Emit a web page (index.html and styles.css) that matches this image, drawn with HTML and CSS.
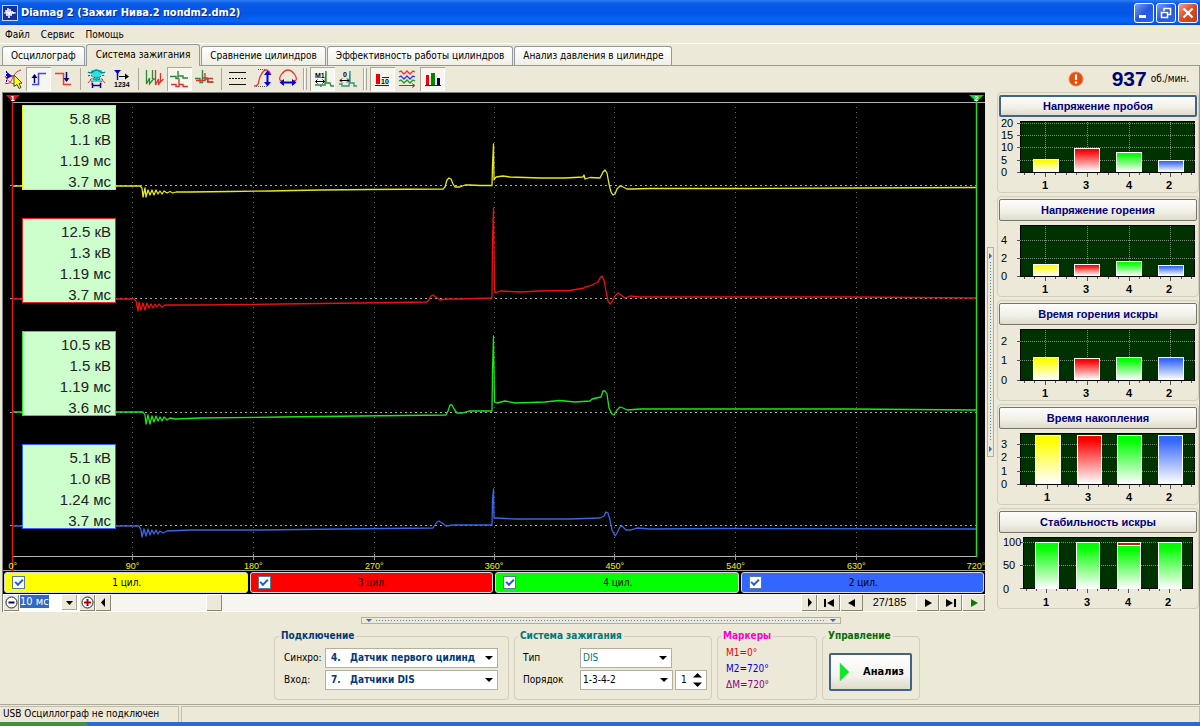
FILE: index.html
```html
<!DOCTYPE html>
<html lang="ru">
<head>
<meta charset="utf-8">
<title>Diamag 2</title>
<link rel="stylesheet" href="styles.css">
</head>
<body>
<div class="window">
  <header class="titlebar">
    <svg class="app-icon" width="16" height="16" viewBox="0 0 16 16"><rect x=".5" y=".5" width="15" height="15" fill="#1a2f9a" stroke="#c8d4f4"/><path d="M2 8H4V5L5 11 6 3 7 13 8 4 9 11 10 6 11 9 12 7V8H14" fill="none" stroke="#fff"/></svg>
    <h1 class="title">Diamag 2 (Зажиг Нива.2 попdm2.dm2)</h1>
    <div class="win-buttons">
      <button class="win-btn" aria-label="Свернуть"><svg width="18" height="18" viewBox="0 0 18 18"><path d="M4 12.500h7" stroke="#fff" stroke-width="3"/></svg></button>
      <button class="win-btn" aria-label="Восстановить"><svg width="18" height="18" viewBox="0 0 18 18"><path d="M7 7V4.500H13.500V10.500H11M6.500 4.500h7.500M4.500 8.500h6v5h-6z" fill="none" stroke="#fff" stroke-width="1.500"/></svg></button>
      <button class="win-btn win-close" aria-label="Закрыть"><svg width="18" height="18" viewBox="0 0 18 18"><path d="M4.500 4.500l9 9M13.500 4.500l-9 9" stroke="#fff" stroke-width="2.200"/></svg></button>
    </div>
  </header>

  <nav class="menu">
    <button>Файл</button><button>Сервис</button><button>Помощь</button>
  </nav>

  <div class="tabs" role="tablist">
    <button class="tab" role="tab">Осциллограф</button>
    <button class="tab tab-active" role="tab" aria-selected="true">Система зажигания</button>
    <button class="tab" role="tab">Сравнение цилиндров</button>
    <button class="tab" role="tab">Эффективность работы цилиндров</button>
    <button class="tab" role="tab">Анализ давления в цилиндре</button>
  </div>

  <main class="page">
    <div class="topline">
      <div class="toolbar">
        <button class="tool" aria-label="Курсор"><svg viewBox="0 0 25 24"><path d="M5.500 4v13" stroke="#00c" fill="none" stroke-dasharray="2 1"/><path d="M6 5l5 4-5 3z" fill="#00e"/><path d="M10 9h4" stroke="#00c" stroke-dasharray="2 1"/><path d="M4 16c5 2 6-2 8-6s4-6 8-7M4 9c3 5 5 7 9 8" stroke="#e03030" fill="none"/><path d="M13 8l8 8-3 .5 2 4-2 1-2-4-3 2z" fill="#ff0" stroke="#444"/></svg></button>
        <button class="tool pressed" aria-label="Фронт"><svg viewBox="0 0 25 24"><path d="M6 17.500h6.500v-11H20" stroke="#44f" stroke-width="1.500" fill="none"/><path d="M8.500 8v8" stroke="#007" stroke-width="1.500"/><path d="M5.500 11l3-4 3 4z" fill="#007"/></svg></button>
        <button class="tool" aria-label="Спад"><svg viewBox="0 0 25 24"><path d="M4 6.500h8.500v11H20" stroke="#f33" stroke-width="1.500" fill="none"/><path d="M15.500 5v9" stroke="#007" stroke-width="1.500"/><path d="M12.500 11l3 4 3-4z" fill="#007"/></svg></button>
        <i class="sep"></i>
        <button class="tool" aria-label="Диапазон"><svg viewBox="0 0 25 24"><path d="M7 3h11v4l-3 3 3 5H7l3-5-3-3z" fill="#2de0e0"/><path d="M4 5c4 3 5-2 8.500-2s5 5 8.500 2" stroke="#088" stroke-width="1.500" fill="none"/><path d="M4 9c4-2 5 2 8.500 2S18 7 21 9M6 13c3-3 4 0 6.500 0s4-3 6.500 0" stroke="#333" stroke-dasharray="2 1" fill="none"/><path d="M4 16c3-5 5-1 4 2M21 16c-3-5-5-1-4 2" stroke="#c33" fill="none"/><path d="M8.500 16v5M16.500 16v5M9 18.500h7" stroke="#00a" stroke-width="1.500"/></svg></button>
        <button class="tool" aria-label="Нумерация"><svg viewBox="0 0 25 24"><path d="M5 3h7L8.500 7z" fill="#00c"/><path d="M8.500 5v8" stroke="#00c" stroke-width="1.500"/><path d="M10 9.500h7" stroke="#000"/><path d="M16 6.500l4 3-4 3z"/><text x="5" y="20" class="icon-text">1234</text></svg></button>
        <i class="sep"></i>
        <button class="tool" aria-label="Парад"><svg viewBox="0 0 25 24"><path d="M4.500 3v14l3-6v6l4-5h2" stroke="#2a8a3a" stroke-width="1.300" fill="none"/><path d="M10.500 3v9" stroke="#2a8a3a" stroke-width="1.300"/><path d="M13.500 3v15l3-6v6l2-4V6v9l3-3" stroke="#d33" stroke-width="1.300" fill="none"/></svg></button>
        <button class="tool pressed" aria-label="Растр"><svg viewBox="0 0 25 24"><path d="M3 9.500h6v2h2V4v5h5v2h5" stroke="#2a8a3a" stroke-width="1.400" fill="none"/><path d="M4 17.500h5v2h3v-8v6h4v2h5" stroke="#d33" stroke-width="1.400" fill="none"/></svg></button>
        <button class="tool" aria-label="Наложение"><svg viewBox="0 0 25 24"><path d="M3 11.500h5v4h2.500V3v8h5v4h6" stroke="#2a8a3a" stroke-width="1.400" fill="none"/><path d="M4 13.500h9V6v6h3v3h5M16 11.500h5" stroke="#d33" stroke-width="1.400" fill="none"/></svg></button>
        <i class="sep"></i>
        <button class="tool" aria-label="Линии"><svg viewBox="0 0 25 24"><path d="M4 5.500h17M4 17.500h17" stroke="#111"/><path d="M4 11.500h17" stroke="#111" stroke-dasharray="2 1"/></svg></button>
        <button class="tool" aria-label="По вертикали"><svg viewBox="0 0 25 24"><path d="M4 19c6 0 4-5 6-9s3-7 6-7 4 3 5 5" stroke="#e33" stroke-width="1.300" fill="none"/><path d="M8 2.500h8M6 19.500h12" stroke="#555" stroke-dasharray="1 1"/><path d="M17.500 6v11" stroke="#00d" stroke-width="2"/><path d="M14 8l3.500-4.500L21 8zM14 15l3.500 4.500L21 15z" fill="#00d"/></svg></button>
        <button class="tool" aria-label="По горизонтали"><svg viewBox="0 0 25 24"><path d="M7 14c-3 0-3-3-1-6s4-5 7-5 5 2 7 5 2 6-1 6" stroke="#e33" stroke-width="1.300" fill="none"/><path d="M7 15.500h12" stroke="#00d" stroke-width="2"/><path d="M9 12l-4.500 3.500L9 19zM17 12l4.500 3.500L17 19z" fill="#00d"/></svg></button>
        <i class="sep sep-double"></i>
        <button class="tool pressed" aria-label="Маркер M1"><svg viewBox="0 0 25 24"><path d="M5 18h6v2M11 18h4l1-14v12h4l1 3h3" stroke="#298a4a" stroke-width="1.400" fill="none"/><path d="M6 14.500h8M7.500 12.500l-2 2 2 2M12.500 12.500l2 2-2 2" stroke="#000" fill="none"/><text x="5" y="11" class="icon-text">M1</text></svg></button>
        <button class="tool" aria-label="Маркер 0"><svg viewBox="0 0 25 24"><path d="M4 17h3v2h7l1-15v12h4v3h3" stroke="#299a8a" stroke-width="1.400" fill="none"/><path d="M5 13.500h9M7 11.500l-2 2 2 2M12 11.500l2 2-2 2" stroke="#000" fill="none"/><text x="8" y="10" class="icon-text">0</text></svg></button>
        <i class="sep sep-double"></i>
        <button class="tool pressed" aria-label="Значения"><svg viewBox="0 0 25 24"><path d="M6 7h4v10H6z" fill="#e00"/><path d="M5 18.500h14M12 10.500h7" stroke="#222"/><text x="11" y="17" class="icon-text">10</text></svg></button>
        <button class="tool" aria-label="Тренды"><svg viewBox="0 0 25 24"><g fill="none" stroke-width="1.300"><path d="M4 5l2-1 3 3 3-3 3 3 3-3 2 1" stroke="#e33"/><path d="M4 10l2-1 3 3 3-3 3 3 3-3 2 1" stroke="#33e"/><path d="M4 14l2-1 3 3 3-3 3 3 3-3 2 1" stroke="#292"/></g><path d="M4 18.500h15M17 16.500l3 2-3 2" stroke="#555" fill="none"/></svg></button>
        <button class="tool pressed" aria-label="Гистограммы"><svg viewBox="0 0 25 24"><path d="M5 18.500h16" stroke="#222"/><path d="M6 8h3v10H6z" fill="#e00"/><path d="M11 6h4v12h-4z" fill="#080"/><path d="M17 11h3v7h-3z" fill="#006"/></svg></button>
      </div>
      <div class="rpm">
        <svg class="alert" width="16" height="16" viewBox="0 0 16 16"><circle cx="8" cy="8" r="7" fill="#e0500a" stroke="#e8895a"/><path d="M8 3.500v5.500" stroke="#fff" stroke-width="2.200"/><circle cx="8" cy="11.500" r="1.300" fill="#fff"/></svg>
        <strong>937</strong><span>об./мин.</span>
      </div>
    </div>

    <div class="work">
      <section class="scope">
        <div class="plot">
          <svg class="plot-svg">
            <svg width="100%" height="100%" viewBox="3 93 982 478" preserveAspectRatio="none">
              <g fill="none" shape-rendering="crispEdges">
                <path d="M12 102.500H985M12 556.500H977" stroke="#b4b4b4"/>
                <path d="M132.500 107V556M253.500 107V556M374.500 107V556M494.500 107V556M614.500 107V556M735.500 107V556M856.500 107V556" stroke="#6a6a6a" stroke-dasharray="1 4"/>
                <path d="M132.500 554v6M253.500 554v6M374.500 554v6M494.500 554v6M614.500 554v6M735.500 554v6M856.500 554v6M3 570.500H985" stroke="#999"/>
                <path d="M10 185.500H976M10 298.500H976M10 412.500H976M10 525.500H976" stroke="#a8a8a8" stroke-dasharray="2 3"/>
              </g>
              <g fill="none" stroke-width="1.300" stroke-linejoin="round">
                <path stroke="#e8e820" d="M12 186H140L142 188 143 197 145 188 146 197 148 190 150 195 152 190 154 195 156 190 158 194 160 191 162 194 164 191 167 193 170 191.500 173 193 176 192 190 192 230 191.500 270 191 320 190 370 189.500 443 189 445 187 447 180 449 178 451 179 453 184 455 187 460 187 465 185 470 185 480 185.500 492 185.500 492.500 165 493.500 144 494 180 496 177 503 176 510 177 540 178 565 178 583 177 584 175 585 179 590 177.500 600 178 603 172 605 170 607 173 609 184 611 192 613 195 615 194 617 189 620 186 623 187 627 189 632 189 650 188.500 750 188.500 860 188 976 187.500"/>
                <path stroke="#ee1111" d="M12 299H134L136 301 138 311 139 302 141 310 143 303 145 310 147 303 149 308 151 304 153 308 155 304 157 307 159 304 162 307 165 305 200 305 280 304 360 303 427 302 429 300 431 296 433 295 436 297 440 300 447 299 460 299 492 298 492.500 240 493.500 208 494.500 290 496 293 500 291 520 292 540 291 570 290.500 584 288 585 287 592 285 598 282 600 278 602 276 604 280 606 291 608 301 610 304 612 302 615 296 618 293 621 295 625 298 630 296 640 297 720 297 850 297 976 298"/>
                <path stroke="#18ea18" d="M12 412H143L145 415 146 424 148 415 150 424 152 416 154 422 156 416 158 421 160 417 162 421 164 417 167 420 170 418 175 419 200 418 280 417 360 416 446 415 448 411 450 405 452 405 454 409 457 413 462 413 469 411 492 411 492.500 370 493.500 336 494.500 402 497 403 505 401 515 403 545 402 559 400.500 565 401 575 402 590 401 592 399 601 397 603 391 605 391 607 394 609 408 612 414 614 415 617 410 620 407 623 408 627 410 640 409 720 409 850 409 976 410"/>
                <path stroke="#3568e4" d="M12 526H139L141 530 142 537 144 529 146 536 148 529 150 535 152 530 154 534 156 530 158 534 160 531 163 533 167 531 190 530 260 530 340 529 433 528 435 525 437 522 439 521 442 523 446 526 453 525 492 525 492.500 500 493.500 489 494 518 496 518 515 519 570 519 600 518 604 516 606 512 608 513 610 520 612 530 615 536 617 533 620 527 622 526 626 530 630 530 637 528 650 529 720 528.500 976 529"/>
              </g>
              <path d="M12.500 98V571" stroke="#e81818" stroke-width="1.500"/>
              <path d="M976.500 98V557" stroke="#20e020" stroke-width="1.500"/>
              <path d="M6 95H20L12.500 102z" fill="#e81010"/>
              <path d="M969 95H984L976.500 102z" fill="#10d010"/>
            </svg>
            <g class="marker-num"><text x="1%" y="8">1</text><text x="99.100%" y="8">2</text></g>
            <g class="degrees">
              <text x="1%" y="476">0°</text><text x="13.200%" y="476">90°</text><text x="25.500%" y="476">180°</text><text x="37.800%" y="476">270°</text><text x="50%" y="476">360°</text><text x="62.300%" y="476">450°</text><text x="74.600%" y="476">540°</text><text x="86.900%" y="476">630°</text><text x="99.100%" y="476">720°</text>
            </g>
          </svg>
          <div class="readings">
            <div class="reading yellow"><span>5.8 кВ</span><span>1.1 кВ</span><span>1.19 мс</span><span>3.7 мс</span></div>
            <div class="reading red"><span>12.5 кВ</span><span>1.3 кВ</span><span>1.19 мс</span><span>3.7 мс</span></div>
            <div class="reading green"><span>10.5 кВ</span><span>1.5 кВ</span><span>1.19 мс</span><span>3.6 мс</span></div>
            <div class="reading blue"><span>5.1 кВ</span><span>1.0 кВ</span><span>1.24 мс</span><span>3.7 мс</span></div>
          </div>
        </div>
        <div class="channels">
          <label class="channel yellow"><input type="checkbox" checked><span>1 цил.</span></label>
          <label class="channel red"><input type="checkbox" checked><span>3 цил.</span></label>
          <label class="channel green"><input type="checkbox" checked><span>4 цил.</span></label>
          <label class="channel blue"><input type="checkbox" checked><span>2 цил.</span></label>
        </div>
        <div class="player">
          <button class="pbtn small" aria-label="Уменьшить"><svg width="13" height="13" viewBox="0 0 13 13"><circle cx="6.500" cy="6.500" r="5.500" fill="#fff" stroke="#222"/><path d="M3.500 6.500h6" stroke="#007" stroke-width="2"/></svg></button>
          <div class="timebase">
            <input type="text" value="10 мс" aria-label="Развёртка">
            <button class="drop" aria-label="Выбрать"><svg width="9" height="6" viewBox="0 0 9 6"><path d="M1 1h7L4.500 5z"/></svg></button>
          </div>
          <button class="pbtn small" aria-label="Увеличить"><svg width="13" height="13" viewBox="0 0 13 13"><circle cx="6.500" cy="6.500" r="5.500" fill="#fff" stroke="#222"/><path d="M3 6.500h7M6.500 3v7" stroke="#a00" stroke-width="2"/></svg></button>
          <button class="pbtn small" aria-label="Влево"><svg width="9" height="9" viewBox="0 0 9 9"><path d="M6 0v9L2 4.500z"/></svg></button>
          <div class="track"><div class="thumb"></div></div>
          <button class="pbtn small" aria-label="Вправо"><svg width="9" height="9" viewBox="0 0 9 9"><path d="M3 0v9l4-4.500z"/></svg></button>
          <button class="pbtn" aria-label="В начало"><svg width="12" height="8" viewBox="0 0 12 8"><path d="M1 0h2v8H1zM11 0v8L4 4z"/></svg></button>
          <button class="pbtn" aria-label="Назад"><svg width="12" height="8" viewBox="0 0 12 8"><path d="M9 0v8L2 4z"/></svg></button>
          <output class="frame">27/185</output>
          <button class="pbtn" aria-label="Вперёд"><svg width="12" height="8" viewBox="0 0 12 8"><path d="M3 0v8l7-4z"/></svg></button>
          <button class="pbtn" aria-label="В конец"><svg width="12" height="8" viewBox="0 0 12 8"><path d="M1 0v8l7-4zM9 0h2v8H9z"/></svg></button>
          <button class="pbtn" aria-label="Пуск"><svg width="12" height="8" viewBox="0 0 12 8"><path d="M3 0v8l7-4z" fill="#0a7a0a"/></svg></button>
        </div>
      </section>

      <div class="vsplit"><svg width="5" height="208" viewBox="0 0 5 208"><path d="M1 5l3 3-3 3zM1 198l3 3-3 3z" fill="#3a62b8"/><path d="M2.500 14v180" stroke="#5a78a8" stroke-dasharray="1 2"/></svg></div>

      <aside class="side">
        <svg class="defs" width="0" height="0" aria-hidden="true"><defs>
          <linearGradient id="gy" x2="0" y2="1"><stop offset=".1" stop-color="#ff0"/><stop offset="1" stop-color="#fff"/></linearGradient>
          <linearGradient id="gr" x2="0" y2="1"><stop offset=".1" stop-color="#f00"/><stop offset="1" stop-color="#fff"/></linearGradient>
          <linearGradient id="gg" x2="0" y2="1"><stop offset=".1" stop-color="#0f0"/><stop offset="1" stop-color="#fff"/></linearGradient>
          <linearGradient id="gb" x2="0" y2="1"><stop offset=".1" stop-color="#36f"/><stop offset="1" stop-color="#fff"/></linearGradient>
        </defs></svg>

        <section class="panel">
          <button class="panel-btn focused">Напряжение пробоя</button>
          <svg class="chart" viewBox="0 0 200 76">
            <rect class="field" x="22.500" y="4.500" width="174" height="51"/>
            <path class="grid" d="M22 6.500H197M22 18.500H197M22 30.500H197M22 43.500H197M47.500 5V55M89.500 5V55M131.500 5V55M172.500 5V55"/>
            <path class="ticks" d="M19 6.500h3M19 18.500h3M19 30.500h3M19 43.500h3M19 55.500h3M26.500 56v2M36.500 56v2M47.500 56v4M57.500 56v2M68.500 56v2M78.500 56v2M89.500 56v4M99.500 56v2M110.500 56v2M120.500 56v2M131.500 56v4M141.500 56v2M151.500 56v2M162.500 56v2M172.500 56v4M183.500 56v2M193.500 56v2"/>
            <g class="bars"><rect x="35.500" y="42.500" width="25" height="12" fill="url(#gy)"/><rect x="76.500" y="31.500" width="25" height="23" fill="url(#gr)"/><rect x="118.500" y="35.500" width="25" height="19" fill="url(#gg)"/><rect x="160.500" y="43.500" width="25" height="11" fill="url(#gb)"/></g>
            <g class="ylab"><text x="3" y="10">20</text><text x="3" y="22">15</text><text x="3" y="34">10</text><text x="3" y="47">5</text><text x="3" y="59">0</text></g>
            <g class="xlab"><text x="47" y="72">1</text><text x="88" y="72">3</text><text x="131" y="72">4</text><text x="171" y="72">2</text></g>
          </svg>
        </section>

        <section class="panel">
          <button class="panel-btn">Напряжение горения</button>
          <svg class="chart" viewBox="0 0 200 76">
            <rect class="field" x="22.500" y="4.500" width="174" height="51"/>
            <path class="grid" d="M22 19.500H197M22 37.500H197M47.500 5V55M89.500 5V55M131.500 5V55M172.500 5V55"/>
            <path class="ticks" d="M19 19.500h3M19 37.500h3M19 55.500h3M26.500 56v2M36.500 56v2M47.500 56v4M57.500 56v2M68.500 56v2M78.500 56v2M89.500 56v4M99.500 56v2M110.500 56v2M120.500 56v2M131.500 56v4M141.500 56v2M151.500 56v2M162.500 56v2M172.500 56v4M183.500 56v2M193.500 56v2"/>
            <g class="bars"><rect x="35.500" y="43.500" width="25" height="11" fill="url(#gy)"/><rect x="76.500" y="43.500" width="25" height="11" fill="url(#gr)"/><rect x="118.500" y="40.500" width="25" height="14" fill="url(#gg)"/><rect x="160.500" y="44.500" width="25" height="10" fill="url(#gb)"/></g>
            <g class="ylab"><text x="3" y="23">4</text><text x="3" y="41">2</text><text x="3" y="59">0</text></g>
            <g class="xlab"><text x="47" y="72">1</text><text x="88" y="72">3</text><text x="131" y="72">4</text><text x="171" y="72">2</text></g>
          </svg>
        </section>

        <section class="panel">
          <button class="panel-btn">Время горения искры</button>
          <svg class="chart" viewBox="0 0 200 76">
            <rect class="field" x="22.500" y="4.500" width="174" height="51"/>
            <path class="grid" d="M22 16.500H197M22 35.500H197M47.500 5V55M89.500 5V55M131.500 5V55M172.500 5V55"/>
            <path class="ticks" d="M19 16.500h3M19 35.500h3M19 55.500h3M26.500 56v2M36.500 56v2M47.500 56v4M57.500 56v2M68.500 56v2M78.500 56v2M89.500 56v4M99.500 56v2M110.500 56v2M120.500 56v2M131.500 56v4M141.500 56v2M151.500 56v2M162.500 56v2M172.500 56v4M183.500 56v2M193.500 56v2"/>
            <g class="bars"><rect x="35.500" y="32.500" width="25" height="22" fill="url(#gy)"/><rect x="76.500" y="33.500" width="25" height="21" fill="url(#gr)"/><rect x="118.500" y="32.500" width="25" height="22" fill="url(#gg)"/><rect x="160.500" y="32.500" width="25" height="22" fill="url(#gb)"/></g>
            <g class="ylab"><text x="3" y="20">2</text><text x="3" y="39">1</text><text x="3" y="59">0</text></g>
            <g class="xlab"><text x="47" y="72">1</text><text x="88" y="72">3</text><text x="131" y="72">4</text><text x="171" y="72">2</text></g>
          </svg>
        </section>

        <section class="panel">
          <button class="panel-btn">Время накопления</button>
          <svg class="chart" viewBox="0 0 200 76">
            <rect class="field" x="22.500" y="4.500" width="174" height="51"/>
            <path class="grid" d="M22 15.500H197M22 28.500H197M22 42.500H197"/>
            <path class="ticks" d="M19 15.500h3M19 28.500h3M19 42.500h3M19 55.500h3M28.500 56v2M38.500 56v2M49.500 56v4M59.500 56v2M70.500 56v2M80.500 56v2M90.500 56v4M100.500 56v2M110.500 56v2M120.500 56v2M131.500 56v4M141.500 56v2M151.500 56v2M162.500 56v2M172.500 56v4M183.500 56v2M193.500 56v2"/>
            <g class="bars"><rect x="37.500" y="6.500" width="25" height="48" fill="url(#gy)"/><rect x="79.500" y="6.500" width="24" height="48" fill="url(#gr)"/><rect x="119.500" y="6.500" width="24" height="48" fill="url(#gg)"/><rect x="160.500" y="6.500" width="24" height="48" fill="url(#gb)"/></g>
            <g class="ylab"><text x="3" y="19">3</text><text x="3" y="32">2</text><text x="3" y="46">1</text><text x="3" y="59">0</text></g>
            <g class="xlab"><text x="49" y="72">1</text><text x="90" y="72">3</text><text x="131" y="72">4</text><text x="171" y="72">2</text></g>
          </svg>
        </section>

        <section class="panel">
          <button class="panel-btn">Стабильность искры</button>
          <svg class="chart" viewBox="0 0 200 76">
            <rect class="field" x="25.500" y="4.500" width="169" height="51"/>
            <path class="grid" d="M25 9.500H195M25 32.500H195"/>
            <path class="ticks" d="M22 9.500h3M22 32.500h3M22 55.500h3M28.500 56v2M38.500 56v2M48.500 56v4M58.500 56v2M69.500 56v2M79.500 56v2M89.500 56v4M99.500 56v2M110.500 56v2M120.500 56v2M130.500 56v4M140.500 56v2M151.500 56v2M161.500 56v2M171.500 56v4M182.500 56v2"/>
            <g class="bars"><rect x="37.500" y="9.500" width="23" height="46" fill="url(#gg)"/><rect x="78.500" y="9.500" width="23" height="46" fill="url(#gg)"/><rect x="119.500" y="9.500" width="23" height="46" fill="#b42020"/><rect x="119.500" y="12.500" width="23" height="43" fill="url(#gg)"/><rect x="160.500" y="9.500" width="23" height="46" fill="url(#gg)"/></g>
            <g class="ylab"><text x="5" y="13">100</text><text x="5" y="36">50</text><text x="5" y="60">0</text></g>
            <g class="xlab"><text x="48" y="73">1</text><text x="89" y="73">3</text><text x="130" y="73">4</text><text x="170" y="73">2</text></g>
          </svg>
        </section>
      </aside>
    </div>

    <div class="hsplit"><i class="arrow"></i><i class="dots"></i><i class="arrow"></i></div>

    <form class="controls">
      <fieldset class="group connect">
        <legend>Подключение</legend>
        <div class="form">
          <label for="sync">Синхро:</label>
          <span class="combo"><select id="sync"><option>4.&nbsp;&nbsp; Датчик первого цилинд</option></select></span>
          <label for="inp">Вход:</label>
          <span class="combo"><select id="inp"><option>7.&nbsp;&nbsp; Датчики DIS</option></select></span>
        </div>
      </fieldset>
      <fieldset class="group ignition">
        <legend>Система зажигания</legend>
        <div class="form">
          <label for="type">Тип</label>
          <span class="combo combo-type"><select id="type"><option>DIS</option></select></span>
          <label for="order">Порядок</label>
          <span class="pair">
            <span class="combo"><select id="order"><option>1-3-4-2</option></select></span>
            <span class="spin"><input type="text" value="1" aria-label="Цилиндр"><svg width="9" height="14" viewBox="0 0 9 14"><path d="M0 4.500L4.500 0 9 4.500zM0 9.500L4.500 14 9 9.500z"/></svg></span>
          </span>
        </div>
      </fieldset>
      <fieldset class="group markers">
        <legend>Маркеры</legend>
        <p class="m1">M1=0°</p><p class="m2">M2=720°</p><p class="dm">ΔM=720°</p>
      </fieldset>
      <fieldset class="group manage">
        <legend>Управление</legend>
        <button type="button" class="analyze"><svg width="12" height="18" viewBox="0 0 12 18"><path d="M1 0v18l9-9z" fill="#0e2" stroke="#7c7" stroke-width=".6"/></svg>Анализ</button>
      </fieldset>
    </form>
  </main>

  <footer class="status"><div class="cell first">USB Осциллограф не подключен</div><div class="cell"></div></footer>
  <div class="taskbar"><div class="start"></div></div>
</div>
</body>
</html>
```
FILE: styles.css
```css
* { box-sizing: border-box; }
body {
  margin: 0;
  font: 10px/14px "DejaVu Sans Condensed", "Liberation Sans", sans-serif;
  background: #ece9d8;
  color: #000;
}
button, input, select { font: inherit; color: inherit; margin: 0; padding: 0; }
button { border: 0; background: none; }
.window { min-height: 100vh; display: flex; flex-direction: column; }

/* Title bar and menu */
.titlebar {
  display: flex; align-items: center; gap: 3px;
  height: 25px; padding: 0 2px;
  background: linear-gradient(#2b7cf2, #0a5ae8 15%, #0455e4 55%, #0366fb 85%, #0348c4);
}
.title {
  flex: 1; margin: 0; color: #fff;
  font: bold 11px/16px "DejaVu Sans Condensed", sans-serif;
  text-shadow: 1px 1px #0a2a80;
}
.win-buttons { display: flex; gap: 2px; }
.win-btn {
  width: 20px; height: 20px; display: grid; place-items: center;
  border: 1px solid #fff; border-radius: 3px;
  background: linear-gradient(135deg, #7ca0f4, #2458e0 50%, #2a62ea);
}
.win-close { background: linear-gradient(135deg, #f0a088, #dc4a20 50%, #c83c14); }
.menu {
  display: flex; gap: 11px; height: 19px; padding: 1px 5px 0;
  border-bottom: 1px solid #fff;
}

/* Tabs */
.tabs {
  display: flex; align-items: flex-end; gap: 1px;
  height: 22px; padding-left: 2px;
  border-bottom: 1px solid #919b9c;
}
.tab {
  height: 19px; padding: 0 8px;
  border: 1px solid #919b9c; border-bottom: 0; border-radius: 3px 3px 0 0;
  background: linear-gradient(#fff, #f0efe6);
}
.tab-active {
  height: 22px; margin-bottom: -1px; padding: 0 9px 2px;
  background: #ece9d8;
}

/* Toolbar */
.page { flex: 1; border-right: 1px solid #919b9c; }
.topline { display: flex; justify-content: space-between; align-items: center; height: 26px; padding: 0 10px 0 1px; }
.toolbar { display: flex; }
.tool { width: 25px; height: 24px; }
.tool svg { display: block; width: 25px; height: 24px; }
.pressed {
  background: #f6f5ee;
  box-shadow: inset 1px 1px #aca899, inset -1px -1px #fff;
}
.sep { width: 8px; margin: 1px 0; background: linear-gradient(#aca899, #aca899) 4px 0 / 1px 100% no-repeat; }
.sep-double { width: 10px; background: linear-gradient(90deg, #aca899 1px, #fff 1px 2px, #ece9d8 2px 3px, #aca899 3px) 3px 0 / 4px 100% no-repeat; }
.icon-text { font: bold 7px "Liberation Sans", sans-serif; }
.rpm { display: flex; align-items: center; }
.rpm strong { margin: 0 4px 0 28px; font: bold 21px/22px "Liberation Sans", sans-serif; color: #00006e; }

/* Oscilloscope */
.work { display: flex; }
.scope { flex: 1; min-width: 0; margin-left: 2px; border: 1px solid #808080; border-width: 1px 0 0 1px; background: #000; }
.plot { position: relative; height: 478px; }
.plot-svg { display: block; width: 100%; height: 478px; }
.degrees, .marker-num { font: 9px "Liberation Sans", sans-serif; text-anchor: middle; }
.degrees { fill: #f4f400; }
.marker-num { fill: #fff; font-size: 8px; font-weight: bold; }
.readings { position: absolute; left: 19px; top: 12px; display: flex; flex-direction: column; gap: 28px; }
.reading {
  display: flex; flex-direction: column; align-items: flex-end;
  width: 94px; height: 85px; padding: 2px 4px 0 0;
  border: 1px solid; background: #cfc; overflow: hidden;
}
.reading span { color: #222; font: 15px/21px "Liberation Sans", sans-serif; }
.reading.yellow { border-color: #ee0; }
.reading.red { border-color: #e22; }
.reading.green { border-color: #2e2; }
.reading.blue { border-color: #36f; }

.channels { display: flex; gap: 2px; height: 23px; padding: 1px; }
.channel {
  flex: 1; display: flex; align-items: center; padding-left: 7px;
  border: 1px solid #d8d8d8; border-radius: 3px;
}
.channel span { flex: 1; text-align: center; padding-right: 18px; }
.channel.yellow { background: #ff0; }
.channel.red { background: #f00; }
.channel.green { background: #0f0; }
.channel.blue { background: #36f; }
.channel input {
  appearance: none; width: 13px; height: 13px;
  border: 1px solid #5a7a9a; background: #fff; display: grid; place-items: center;
}
.channel input:checked::before {
  content: ""; width: 6px; height: 3px; margin-bottom: 2px;
  border: solid #2a5ac8; border-width: 0 0 2px 2px; rotate: -45deg;
}

.player { display: flex; align-items: stretch; height: 18px; background: #ece9d8; border-bottom: 1px solid #fff; }
.pbtn {
  width: 23px; display: grid; place-items: center;
  box-shadow: inset 1px 1px #fff, inset -1px -1px #8a8778;
}
.small { width: 16px; }
.timebase { display: flex; width: 60px; padding: 1px 2px 1px 1px; background: #fff; }
.timebase input { width: 29px; height: 13px; border: 0; background: #316ac5; color: #fff; font-size: 11px; }
.drop { width: 15px; margin-left: auto; display: grid; place-items: center; background: #ece9d8; box-shadow: inset -1px -1px #aca899; }
.track { flex: 1; padding-left: 95px; background: #f6f5ef; }
.thumb { width: 16px; height: 17px; background: #ece9d8; box-shadow: inset 1px 1px #fff, inset -1px -1px #8a8778; }
.frame { width: 53px; text-align: center; font: 11px/17px "Liberation Sans", sans-serif; }

/* Splitters */
.vsplit { align-self: flex-start; margin: 155px 3px 0 2px; border: 1px solid #b4b09c; width: 7px; }
.vsplit svg { display: block; }
.hsplit {
  display: flex; align-items: center; gap: 4px; width: 40%; height: 7px;
  margin: 5px auto 0 361px; padding: 0 4px; border: 1px solid #b4b09c;
}
.arrow { border: solid transparent; border-width: 3px 3px 0; border-top-color: #3a62b8; }
.dots { flex: 1; height: 1px; background: repeating-linear-gradient(90deg, #5a78a8 0 1px, transparent 1px 3px); }

/* Side charts */
.side { width: 202px; display: flex; flex-direction: column; gap: 3px; }
.defs { position: absolute; }
.panel { height: 101px; padding: 2px 0 0; border: 1px solid #d0cdbc; border-radius: 4px; }
.panel-btn {
  display: block; width: calc(100% - 2px); height: 22px; margin-left: 1px;
  border: 1px solid #77746a; border-radius: 2px;
  background: linear-gradient(#fdfdfb, #f0efe6 60%, #dedbcb);
  color: #00007a; font: bold 11px/18px "Liberation Sans", sans-serif;
}
.focused { border: 2px solid #3f6488; line-height: 16px; }
.chart { display: block; width: 100%; }
.chart path, .chart rect { shape-rendering: crispEdges; }
.field { fill: #003200; stroke: #000; }
.grid { stroke: #7a927a; stroke-dasharray: 1 1; fill: none; }
.ticks { stroke: #555; fill: none; }
.bars rect { stroke: #fff; }
.ylab { font: 11px "Liberation Sans", sans-serif; }
.xlab { font: bold 11px "Liberation Sans", sans-serif; text-anchor: middle; }

/* Bottom controls */
.controls { display: flex; justify-content: center; gap: 5px; padding: 5px 5px 0 0; }
.group {
  margin: 0; min-width: 0; height: 71px; padding: 0;
  border: 1px solid #d0cdbc; border-radius: 4px;
}
.group legend { margin-left: 4px; padding: 0 2px; font-weight: bold; line-height: 14px; }
.connect { width: 235px; padding: 5px 10px 0 9px; }
.connect legend { margin-left: -5px; color: #003a7a; }
.connect select { font-weight: bold; color: #003a7a; }
.form { display: grid; grid-template-columns: 41px 1fr; gap: 2px 0; align-items: center; }
.combo { position: relative; display: block; }
.combo::after {
  content: ""; position: absolute; right: 5px; top: 8px; pointer-events: none;
  border: solid transparent; border-width: 4px 4px 0; border-top-color: #000;
}
.combo select {
  appearance: none; display: block; width: 100%; height: 20px; padding: 0 16px 0 5px;
  border: 1px solid #b4b09c; border-radius: 0; background: #fff;
}
.ignition { width: 198px; padding: 5px 3px 0 8px; }
.ignition legend { margin-left: -5px; color: #007878; }
.ignition .form { grid-template-columns: 57px 1fr; }
.ignition select { padding-left: 2px; }
.combo-type { width: 92px; }
.combo-type .combo, .combo-type select { color: #007878; }
.pair { display: flex; gap: 2px; }
.pair .combo { width: 93px; }
.spin { display: flex; align-items: center; width: 32px; height: 20px; padding: 0 5px; border: 1px solid #b4b09c; background: #fff; }
.spin input { width: 12px; border: 0; background: none; }
.spin svg { flex: none; }
.markers { width: 100px; padding: 3px 0 0 8px; }
.markers legend { margin-left: -5px; color: #f0c; }
.markers p { margin: 0 0 2px; }
.m1 { color: #e00; }
.m2 { color: #00d; }
.dm { color: #808; }
.manage { width: 98px; padding: 10px 6px 0; }
.manage legend { margin-left: -3px; color: #007000; }
.analyze {
  display: flex; align-items: center; gap: 12px;
  width: 83px; height: 38px; padding-left: 8px;
  border: 2px solid #3f6488; border-radius: 2px;
  background: linear-gradient(#fff, #f4f3ee 60%, #dedbcb);
  font-weight: bold; font-size: 11px;
}

/* Status bar */
.status { display: flex; gap: 2px; height: 18px; border-top: 1px solid #aca899; padding-top: 1px; }
.cell { flex: 1; border: 1px solid #c0bdac; border-width: 1px 1px 0 1px; padding-left: 3px; }
.first { flex: none; width: 179px; border-left: 0; }
.taskbar { height: 4px; background: #2a6ad8; }
.start { width: 88px; height: 4px; background: #3c943c; border-radius: 0 4px 0 0; }
```
